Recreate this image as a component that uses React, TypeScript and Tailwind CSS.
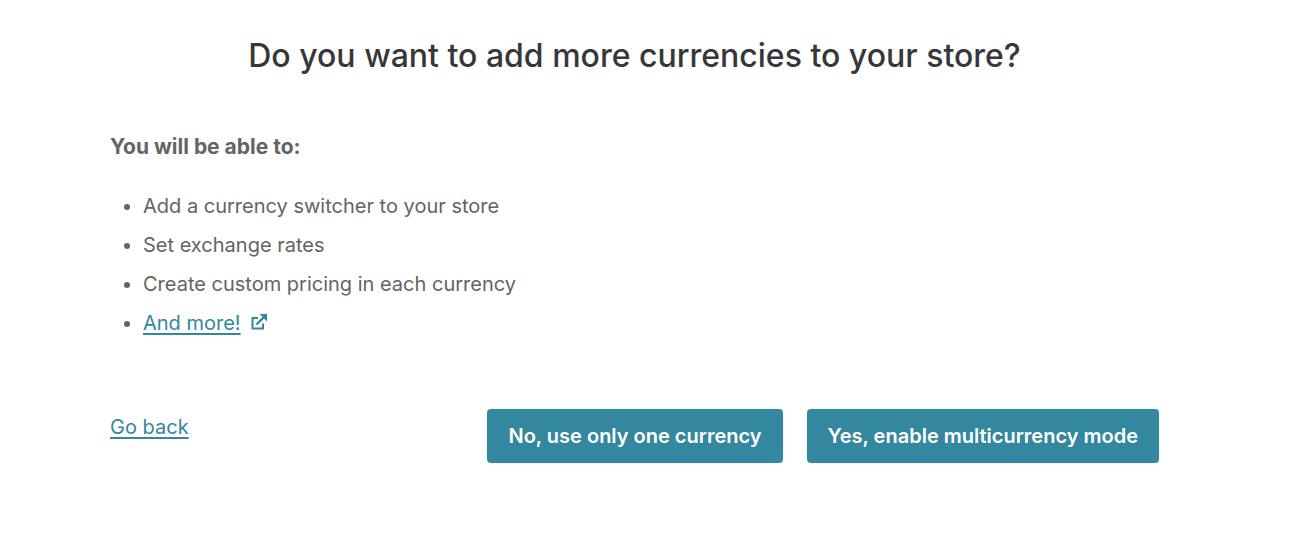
const features = [
  "Add a currency switcher to your store",
  "Set exchange rates",
  "Create custom pricing in each currency",
];

function ExternalIcon() {
  return (
    <svg viewBox="0 0 16 16" className="ml-2.5 inline-block size-4 align-baseline" fill="none" stroke="currentColor" strokeWidth="2" aria-hidden="true">
      <path d="M7 4H1.5v10.5H12V9.5" />
      <path d="M5.5 10.5 13 3" strokeWidth="2.4" />
      <path d="M8.5 0H16v7.5l-2.6-2.6-2.3-2.3z" fill="currentColor" stroke="none" />
    </svg>
  );
}

export default function App() {
  return (
    <main className="min-h-screen bg-white pt-[33px] pr-[154px] pl-[110px] font-['Inter',sans-serif] text-xl text-[#646465]">
      <h1 className="text-center text-[32px] leading-[46px] font-medium text-[#373739]">
        Do you want to add more currencies to your store?
      </h1>

      <section className="mt-[54px]">
        <h2 className="text-[21px] leading-7 font-bold">You will be able to:</h2>
        <ul className="mt-[26px] list-disc pl-[33px] leading-[39px]">
          {features.map((feature) => (
            <li key={feature}>{feature}</li>
          ))}
          <li>
            <a href="#more" className="text-[#33879e]">
              <span className="underline decoration-2 underline-offset-3">And more!</span>
              <ExternalIcon />
            </a>
          </li>
        </ul>
      </section>

      <div className="mt-[66px] flex items-start justify-between">
        <a href="#back" className="mt-1 leading-7 text-[#33879e] underline decoration-2 underline-offset-3">
          Go back
        </a>
        <div className="flex gap-6 font-semibold text-white">
          <button type="button" className="h-[54px] rounded bg-[#33879e] px-[21px]">
            No, use only one currency
          </button>
          <button type="button" className="h-[54px] rounded bg-[#33879e] px-[21px]">
            Yes, enable multicurrency mode
          </button>
        </div>
      </div>
    </main>
  );
}
